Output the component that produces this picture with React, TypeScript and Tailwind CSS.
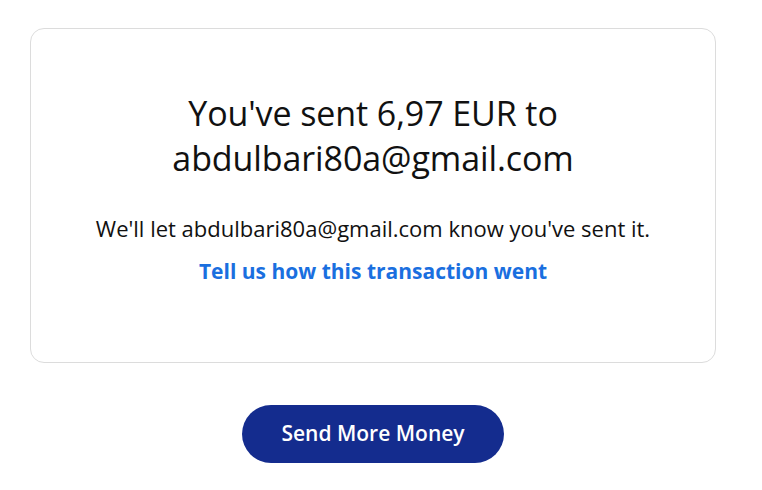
import React from "react";

const App: React.FC = () => {
  return (
    <div className="min-h-[490px] bg-white font-['Open_Sans',sans-serif] text-[#111]">
      <div className="ml-[30px] w-[686px] pt-[28px]">
        <div className="flex h-[335px] flex-col items-center rounded-[14px] border border-[#dcdcdc] pt-[62px] text-center">
          <h1 className="text-[34px] leading-[45px] font-normal tracking-[-0.1px]">
            You've sent 6,97 EUR to
            <br />
            abdulbari80a@gmail.com
          </h1>
          <p className="mt-[33px] text-[22px] leading-[28px]">
            We'll let abdulbari80a@gmail.com know you've sent it.
          </p>
          <a href="#" className="mt-[15px] text-[21px] leading-[28px] font-bold text-[#1a6fdf]">
            Tell us how this transaction went
          </a>
        </div>
        <div className="mt-[42px] flex justify-center">
          <button className="h-[58px] w-[262px] rounded-full bg-[#142c8e] text-[21px] font-semibold text-white">
            Send More Money
          </button>
        </div>
      </div>
    </div>
  );
};

export default App;
